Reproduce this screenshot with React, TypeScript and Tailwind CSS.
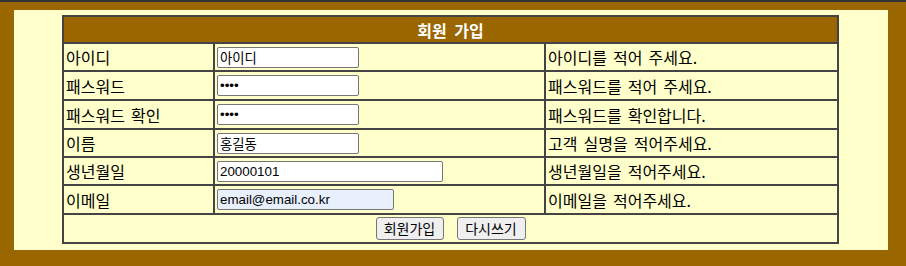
import React from "react";

const labelFont = {
  fontFamily: '"Noto Sans CJK KR", "Noto Sans", sans-serif',
};
const inputFont = {
  fontFamily: '"Liberation Sans", "Noto Sans CJK KR", sans-serif',
};

type Row = {
  label: string;
  type: string;
  value: string;
  width: string;
  hint: string;
  tall: boolean;
  autofill?: boolean;
};

const rows: Row[] = [
  { label: "아이디", type: "text", value: "아이디", width: "w-[142px]", hint: "아이디를 적어 주세요.", tall: false },
  { label: "패스워드", type: "password", value: "1234", width: "w-[142px]", hint: "패스워드를 적어 주세요.", tall: true },
  { label: "패스워드 확인", type: "password", value: "1234", width: "w-[142px]", hint: "패스워드를 확인합니다.", tall: true },
  { label: "이름", type: "text", value: "홍길동", width: "w-[142px]", hint: "고객 실명을 적어주세요.", tall: false },
  { label: "생년월일", type: "text", value: "20000101", width: "w-[226px]", hint: "생년월일을 적어주세요.", tall: false },
  { label: "이메일", type: "text", value: "email@email.co.kr", width: "w-[177px]", hint: "이메일을 적어주세요.", tall: true, autofill: true },
];

export default function App() {
  return (
    <div className="w-[906px] h-[266px] bg-[#996600] border-t-2 border-[#333333] pt-[8px] pl-[14px]">
      <div className="w-[874px] h-[240px] bg-[#ffffcc] pt-[5px] pl-[48px]">
        <div className="w-[777px] border-2 border-[#444444]">
          <div
            className="h-[25px] bg-[#996600] text-white font-bold text-[16px] [word-spacing:4px] flex items-center justify-center"
            style={labelFont}
          >
            회원 가입
          </div>
          {rows.map((r) => (
            <div key={r.label} className={`flex border-t-2 border-[#444444] ${r.tall ? "h-[29px]" : "h-[28px]"}`}>
              <div
                className="w-[149px] flex items-center pl-[2px] text-[16px] [word-spacing:2.5px] text-black"
                style={labelFont}
              >
                {r.label}
              </div>
              <div className="w-[331px] border-l-2 border-[#444444] flex items-center pl-[2px]">
                <input
                  type={r.type}
                  defaultValue={r.value}
                  readOnly
                  className={`${r.width} h-[21px] border border-[#767676] rounded-[2px] px-[2px] py-[1px] text-[13.33px] text-black outline-none ${
                    r.autofill ? "bg-[#e8f0fe]" : "bg-white"
                  }`}
                  style={inputFont}
                />
              </div>
              <div
                className="flex-1 border-l-2 border-[#444444] flex items-center pl-[2px] text-[16px] [word-spacing:2.5px] text-black"
                style={labelFont}
              >
                {r.hint}
              </div>
            </div>
          ))}
          <div className="h-[29px] border-t-2 border-[#444444] flex items-center justify-center gap-[13px]">
            <button
              type="button"
              className="w-[68px] h-[23px] bg-[#efefef] border border-[#767676] rounded-[3px] text-[14px] text-black leading-none flex items-center justify-center"
              style={inputFont}
            >
              회원가입
            </button>
            <button
              type="button"
              className="w-[69px] h-[23px] bg-[#efefef] border border-[#767676] rounded-[3px] text-[14px] text-black leading-none flex items-center justify-center"
              style={inputFont}
            >
              다시쓰기
            </button>
          </div>
        </div>
      </div>
    </div>
  );
}
